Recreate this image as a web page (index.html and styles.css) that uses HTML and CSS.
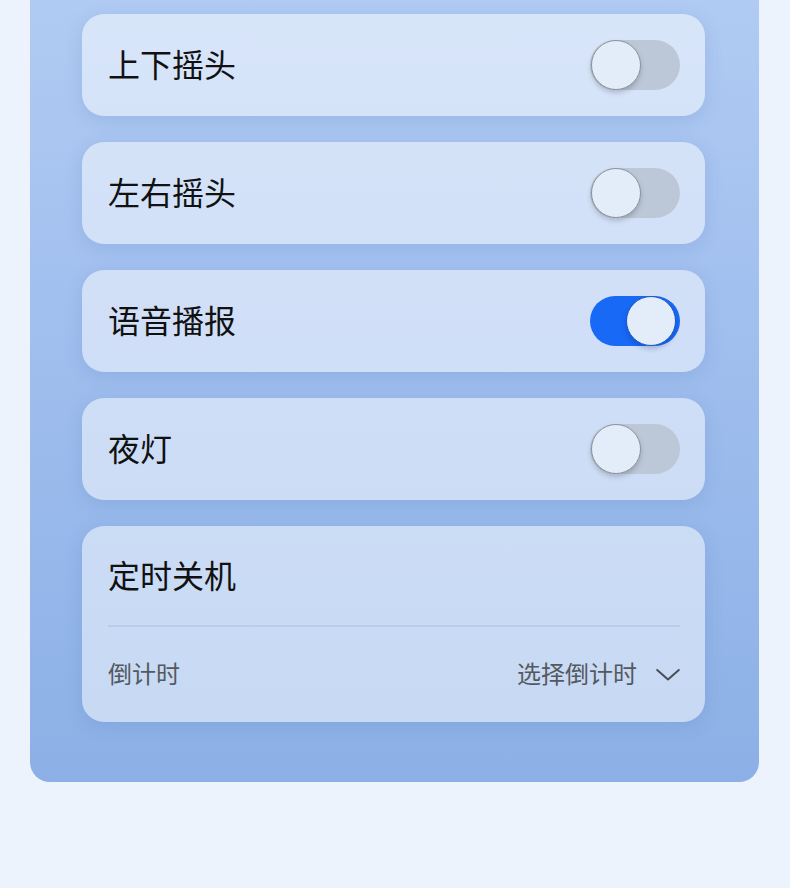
FILE: index.html
```html
<!DOCTYPE html>
<html lang="zh-CN">
<head>
<meta charset="utf-8">
<title>设置</title>
<link rel="stylesheet" href="styles.css">
</head>
<body>
<div class="panel">
  <div class="card row">
    <span class="title">上下摇头</span>
    <span class="toggle"><span class="knob"></span></span>
  </div>
  <div class="card row">
    <span class="title">左右摇头</span>
    <span class="toggle"><span class="knob"></span></span>
  </div>
  <div class="card row">
    <span class="title">语音播报</span>
    <span class="toggle on"><span class="knob"></span></span>
  </div>
  <div class="card row">
    <span class="title">夜灯</span>
    <span class="toggle"><span class="knob"></span></span>
  </div>
  <div class="card timer">
    <div class="timer-head"><span class="title">定时关机</span></div>
    <div class="divider"></div>
    <div class="timer-row">
      <span class="sub">倒计时</span>
      <span class="select"><span class="sub">选择倒计时</span>
        <svg class="chev" width="24" height="16" viewBox="0 0 24 16"><path d="M1.2 3 L12 12.5 L22.8 3" fill="none" stroke="#4a4e55" stroke-width="2" stroke-linecap="round" stroke-linejoin="round"/></svg>
      </span>
    </div>
  </div>
</div>
</body>
</html>
```
FILE: styles.css
```css
html, body {
  margin: 0;
  padding: 0;
}
body {
  background: #edf3fd;
  font-family: "Noto Sans CJK SC", "Noto Sans", sans-serif;
  height: 888px;
  overflow: hidden;
}
.panel {
  width: 729px;
  box-sizing: border-box;
  margin: -30px 0 0 30px;
  padding: 44px 54px 60px 52px;
  border-radius: 0 0 20px 20px;
  background: linear-gradient(180deg, #b2ccf3 0%, #a2c0ef 40%, #8cb0e6 100%);
  display: flex;
  flex-direction: column;
  gap: 26px;
}
.card {
  background: rgba(255, 255, 255, 0.5);
  border-radius: 22px;
  box-shadow: 0 4px 18px rgba(60, 100, 170, 0.16);
}
.row {
  height: 102px;
  box-sizing: border-box;
  padding: 0 25px 0 26px;
  display: flex;
  align-items: center;
  justify-content: space-between;
}
.title {
  font-size: 32px;
  line-height: 1;
  color: #111;
  position: relative;
  top: -2px;
}
.toggle {
  position: relative;
  width: 90px;
  height: 50px;
  border-radius: 25px;
  background: #bcc8d8;
  display: block;
}
.knob {
  position: absolute;
  left: 1px;
  top: 0;
  width: 50px;
  height: 50px;
  box-sizing: border-box;
  border-radius: 50%;
  background: #e3ecf9;
  border: 1px solid #8d939b;
  box-shadow: 0 3px 5px rgba(0, 0, 0, 0.18);
}
.toggle.on {
  background: #1769f6;
}
.toggle.on .knob {
  left: 36px;
  border-color: #1c55c8;
  box-shadow: 0 3px 5px rgba(0, 30, 100, 0.22);
}
.timer {
  padding: 0 25px 0 26px;
  display: flex;
  flex-direction: column;
}
.timer-head {
  height: 99px;
  display: flex;
  align-items: center;
}
.divider {
  height: 2px;
  background: rgba(150, 175, 215, 0.3);
}
.timer-row {
  height: 95px;
  display: flex;
  align-items: center;
  justify-content: space-between;
}
.sub {
  font-size: 24px;
  line-height: 1;
  color: #54595f;
  position: relative;
  top: -2px;
}
.select {
  display: flex;
  align-items: center;
  gap: 19px;
}
.chev {
  display: block;
}
```
